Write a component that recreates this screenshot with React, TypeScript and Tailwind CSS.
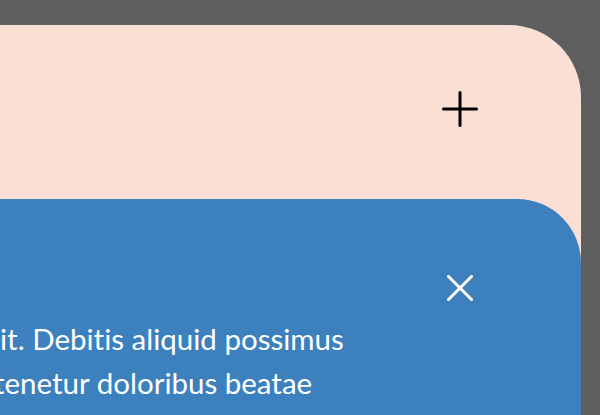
import React from 'react';

const PlusIcon = ({ className }: { className?: string }) => (
  <svg viewBox="0 0 36 36" className={className} fill="none" stroke="currentColor" strokeWidth={3} strokeLinecap="round">
    <line x1="18" y1="1.5" x2="18" y2="34.5" />
    <line x1="1.5" y1="18" x2="34.5" y2="18" />
  </svg>
);

const CloseIcon = ({ className }: { className?: string }) => (
  <svg viewBox="0 0 26 26" className={className} fill="none" stroke="currentColor" strokeWidth={3} strokeLinecap="round">
    <line x1="1.5" y1="1.5" x2="24.5" y2="24.5" />
    <line x1="24.5" y1="1.5" x2="1.5" y2="24.5" />
  </svg>
);

const lines = [
  { hidden: 'Lorem ipsum dolor sit amet consectetur adipisicing el', shown: 'it. Debitis aliquid possimus', offset: '' },
  { hidden: 'voluptatum quae eligendi quos molestias, ', shown: 'tenetur doloribus beatae', offset: '-ml-[6px]' },
];

export default function App() {
  return (
    <div className="min-h-[415px] overflow-hidden bg-[#5e5e5e] pr-[19px] pt-[25px]" style={{ fontFamily: '"Lato", "Noto Sans", sans-serif' }}>
      <div className="flex min-h-[390px] flex-col rounded-tr-[72px] bg-[#fbdfd5]">
        <div className="flex h-[174px] justify-end pr-[103px] pt-[66px]">
          <PlusIcon className="h-[36px] w-[36px] text-black" />
        </div>

        <div className="flex flex-1 flex-col rounded-tr-[64px] bg-[#3c81be] text-white">
          <div className="flex justify-end pr-[108px] pt-[76px]">
            <CloseIcon className="h-[26px] w-[26px]" />
          </div>
          <div className="mt-[16px] text-[29.5px] leading-[44px] [font-variant-ligatures:none]">
            {lines.map((line) => (
              <p key={line.shown} className={`flex whitespace-nowrap ${line.offset}`}>
                <span className="flex w-0 justify-end">{line.hidden}</span>
                <span>{line.shown}</span>
              </p>
            ))}
          </div>
        </div>
      </div>
    </div>
  );
}
